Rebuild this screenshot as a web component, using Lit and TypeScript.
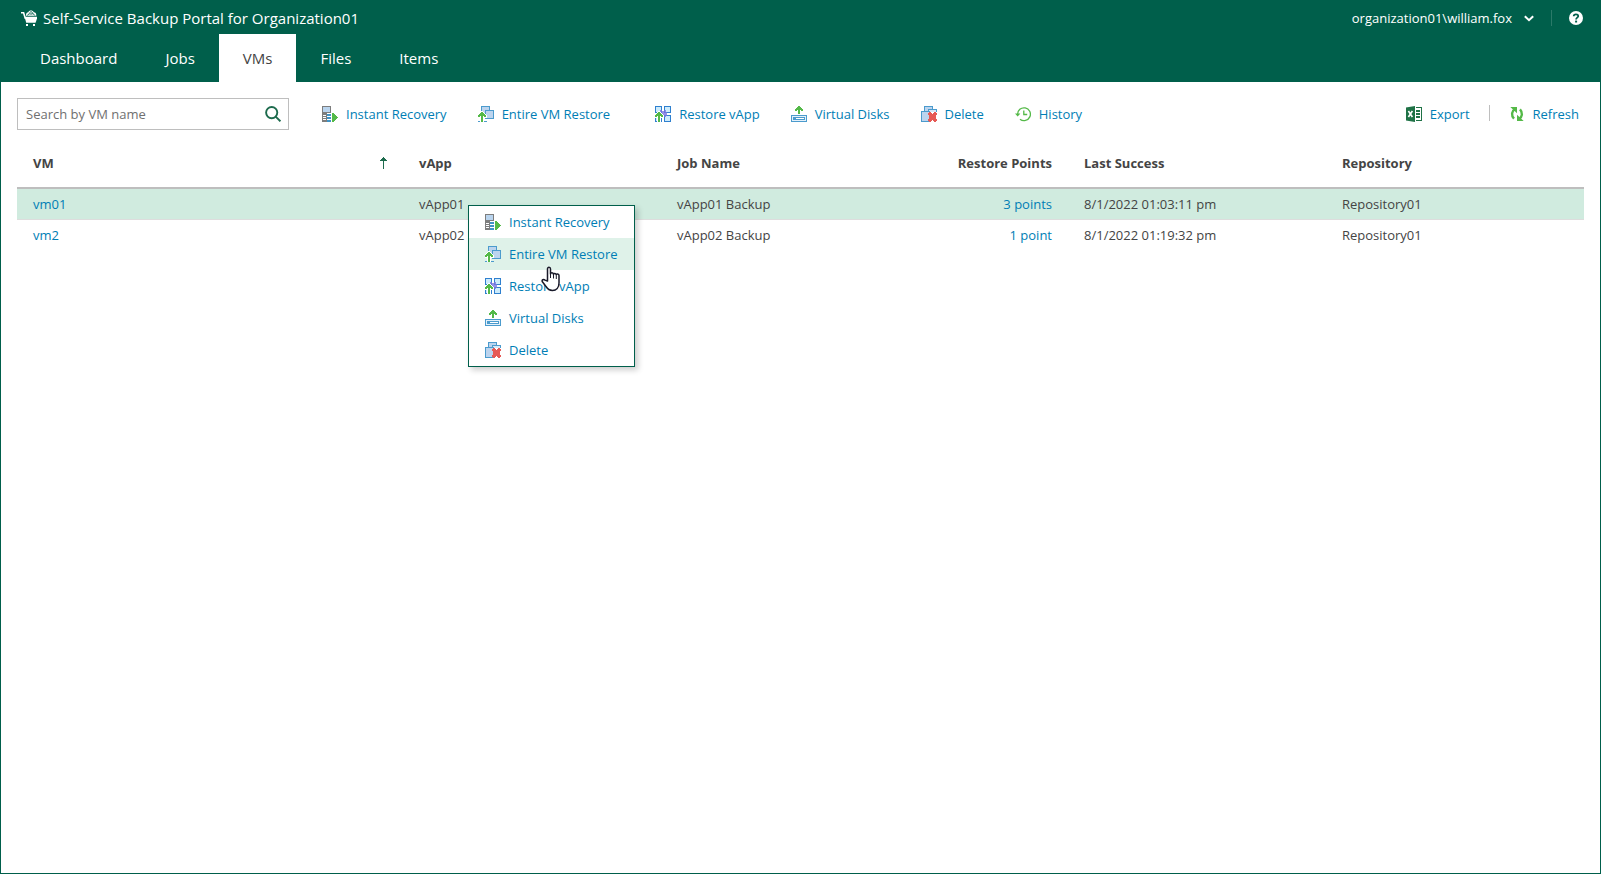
import { LitElement, html, svg, css } from "lit";
import { customElement, property, state } from "lit/decorators.js";
import { classMap } from "lit/directives/class-map.js";

const ARROW = svg`
  <path fill="#fff" d="M3 5h2v1h1v1h1v1h1v1h1v3H6v4H2v-4H0V8h1V7h1V6h1z"/>
  <path fill="#54b948" d="M3 6h2v1h1v1h1v1h1v2H6v-1H5V16H3V10H2v1H0V9h1V8h1V7h1z"/>`;

const ICONS: Record<string, unknown> = {
  instant: svg`
    <path fill="#7d7d7d" d="M0 0h9v7H5v9H0z"/>
    <path fill="#b9d4ee" d="M1 1h7v5H1z"/>
    <path fill="#fff" d="M1 9h3v1H1zM1 11h3v1H1zM1 13h3v1H1z"/>
    <path fill="#3f93c6" d="M5 8h4v2H5zM5 11h4v2H5zM5 14h4v2H5z"/>
    <path fill="#54b948" d="M10 7h2v1h1v1h1v1h1v1h1v1h-1v1h-1v1h-1v1h-1v1h-2z"/>`,
  entire: svg`
    <path fill="#4b9bcd" d="M3 0h9v9H3z"/>
    <path fill="#bcd4ee" d="M4 1h7v7H4z"/>
    <path fill="#4b9bcd" d="M7 4h9v9H7z"/>
    <path fill="#bcd4ee" d="M8 5h7v7H8z"/>
    ${ARROW}
    <path fill="#4b9bcd" d="M0 15h2v1H0zM6 15h3v1H6z"/>`,
  vapp: svg`
    <path fill="#2f80cf" d="M0 0h7v7H0zM9 0h7v7H9zM9 9h7v7H9zM0 9h7v7H0z"/>
    <path fill="#cdebfb" d="M1 1h5v5H1zM10 1h5v5h-5zM10 10h5v5h-5zM1 10h5v5H1z"/>
    <path fill="#7a74e0" opacity=".8" d="M5 4h2v1h2V4h2v2h1v4h-1v1H9v1H7v-1H5v-1H4V6h1z"/>
    ${ARROW}
    <path fill="#2f80cf" d="M0 15h2v1H0zM6 15h1v1H6z"/>`,
  disks: svg`
    <path fill="#54b948" d="M7 0h2v1h1v1h1v1h1v2h-2V4H9v4H7V4H6v1H4V3h1V2h1V1h1z"/>
    <path fill="#4b9bcd" d="M0 9h16v7H0z"/>
    <path fill="#e4f0fa" d="M1 10h14v5H1z"/>
    <path fill="#4b9bcd" d="M2 11h12v3H2z"/>
    <path fill="#fff" d="M5 12h8v1H5z"/>`,
  remove: svg`
    <path fill="#4b9bcd" d="M3 0h9v8H3z"/>
    <path fill="#bcd4ee" d="M4 1h7v6H4z"/>
    <path fill="#4b9bcd" d="M7 3h9v8H7z"/>
    <path fill="#d8e8f6" d="M8 4h7v6H8z"/>
    <path fill="#4b9bcd" d="M0 5h9v11H0z"/>
    <path fill="#bcd4ee" d="M1 6h7v9H1z"/>
    <path fill="#fff" d="M8 6h8v10H8z"/>
    <path fill="#e65a55" d="M8 6h2v1h1v1h1V7h1V6h2v1h1v2h-1v4h1v2h-1v1h-2v-1h-1v-1h-1v1h-1v1H8v-1H7v-2h1V9H7V7h1z"/>`,
  history: svg`
    <g fill="none" stroke="#54b948" stroke-width="1.3" shape-rendering="auto">
      <path d="M2.6 8.5A6.4 6.4 0 1 1 5 13.2"/>
      <path d="M8.8 4.5v4h3.4"/>
    </g>
    <path fill="#54b948" shape-rendering="auto" d="M0 7.5h5.4L2.7 10.6z"/>`,
  excel: svg`
    <path fill="#1f7246" shape-rendering="auto" d="M0 1.6 9 0v16L0 14.4z"/>
    <path fill="none" stroke="#fff" stroke-width="1.6" shape-rendering="auto" d="M2.4 5 6.4 11M6.4 5 2.4 11"/>
    <path fill="#1f7246" d="M10 1h6v14h-6v-1h5V2h-5z"/>
    <path fill="#1f7246" d="M10 4h4v2h-4zM10 7h4v2h-4zM10 10h4v2h-4z"/>`,
  refresh: svg`
    <g fill="none" stroke="#54b948" stroke-width="2.4" shape-rendering="auto">
      <path d="M6 3C2.600 5 2 9.400 5 12.600"/>
      <path d="M10 13c3.400-2 4-6.400 1-9.600"/>
    </g>
    <path fill="#54b948" shape-rendering="auto" d="M1.300 1h6.700v6.300zM14.700 15H8V8.700z"/>`,
};

@customElement("ui-icon")
class UiIcon extends LitElement {
  @property() name = "";
  static styles = css`
    :host { display: block; flex: none; width: 16px; height: 16px; }
    svg { display: block; }
  `;
  render() {
    return html`<svg width="16" height="16" viewBox="0 0 16 16" shape-rendering="crispEdges" aria-hidden="true">${ICONS[this.name]}</svg>`;
  }
}

interface Vm { vm: string; vapp: string; job: string; points: string; success: string; repo: string; }

@customElement("app-root")
class AppRoot extends LitElement {
  @state() tab = "VMs";
  @state() selected = "vm01";

  static styles = css`
    :host {
      display: flex; flex-direction: column; box-sizing: border-box; min-height: 100vh;
      position: relative; background: #fff; color: #444;
      border: 1px solid #005f4b; border-top: 0;
      font: 13px/18px "Open Sans", "Noto Sans", sans-serif;
    }
    * { box-sizing: border-box; }
    button, input { font: inherit; color: inherit; background: none; border: 0; margin: 0; padding: 0; }
    button { cursor: pointer; white-space: nowrap; }
    a { color: #007eb5; text-decoration: none; }

    .header { background: #005f4b; color: #fff; margin: 0 -1px; padding: 0 17px 0 16px; }
    .top { display: flex; align-items: center; justify-content: space-between; height: 34px; padding-top: 2px; }
    .brand { display: flex; align-items: center; gap: 6px; padding-left: 5px; }
    .brand svg { display: block; }
    .title { font-size: 15px; line-height: 20px; font-weight: 400; margin: 0; }
    .account { display: flex; align-items: center; }
    .user { display: flex; align-items: center; gap: 12px; padding-right: 17px; border-right: 1px solid #2b7a69; height: 16px; }
    .help { padding: 0 1px 0 17px; }
    .help svg, .user svg { display: block; }
    .tabs { display: flex; }
    .tab { height: 48px; padding: 0 24px; font-size: 15px; line-height: 20px; }
    .tab.active { background: #fff; color: #444; }

    .content { padding: 16px; }
    .toolbar { display: flex; align-items: center; height: 32px; }
    .search { display: flex; align-items: center; width: 272px; height: 32px; border: 1px solid #bebebe; margin-right: 33px; padding: 0 7px 0 8px; }
    .search input { flex: 1; min-width: 0; height: 30px; outline: 0; }
    .search input::placeholder { color: #707070; opacity: 1; }
    .search svg { display: block; }
    .actions { display: flex; gap: 31px; }
    .actions + .actions { margin-left: 45px; }
    .toolbar .end { margin-left: auto; gap: 0; padding-right: 5px; }
    .action { display: flex; align-items: center; gap: 8px; height: 18px; color: #007eb5; }
    .rule { width: 1px; height: 16px; margin: 0 19px; background: #bebebe; }

    table { width: 100%; margin-top: 8px; border-collapse: collapse; table-layout: fixed; }
    th, td { padding: 0 16px; text-align: left; font-weight: 400; }
    th { height: 50px; font-weight: 700; color: #444; border-bottom: 2px solid #bebebe; }
    td { height: 31px; }
    tbody tr + tr td { border-top: 1px solid #ddd; }
    .selected { background: #d0ebdf; }
    .wide { width: 258px; }
    .narrow { width: 149px; }
    .num { text-align: right; }
    .sorted { display: flex; align-items: center; justify-content: space-between; }

    .menu {
      position: absolute; left: 467px; top: 205px; width: 167px; background: #fff;
      border: 1px solid #005f4b; box-shadow: 3px 3px 6px rgba(0, 0, 0, 0.2);
    }
    .item { display: flex; align-items: center; gap: 8px; width: 100%; height: 32px; padding: 0 16px; color: #007eb5; }
    .item.hover, .item:hover { background: #dff2e9; }
    .cursor { position: absolute; left: 540px; top: 266px; pointer-events: none; }
  `;

  private rows: Vm[] = [
    { vm: "vm01", vapp: "vApp01", job: "vApp01 Backup", points: "3 points", success: "8/1/2022 01:03:11 pm", repo: "Repository01" },
    { vm: "vm2", vapp: "vApp02", job: "vApp02 Backup", points: "1 point", success: "8/1/2022 01:19:32 pm", repo: "Repository01" },
  ];

  private action(icon: string, label: string) {
    return html`<button class="action"><ui-icon name=${icon}></ui-icon>${label}</button>`;
  }

  private menuItem(icon: string, label: string, hover = false) {
    return html`<button role="menuitem" class=${classMap({ item: true, hover })}><ui-icon name=${icon}></ui-icon>${label}</button>`;
  }

  render() {
    return html`
      <header class="header">
        <div class="top">
          <div class="brand">
            <svg width="16" height="16" viewBox="0 0 16 16" aria-hidden="true">
              <path fill="none" stroke="#fff" stroke-width="1.600" d="M0 2.700h2.600l1.800 6"/>
              <path fill="#fff" d="M3.600 6.800H16v1.600L14.600 12.700H5.200z"/>
              <path fill="#fff" d="M5 5.800C4.800 3.600 6 2.200 7.300 2.200 7.900-.2 11.900-.2 12.800 2.200 14.800 2.300 15.600 4 15.200 5.800z"/>
              <path fill="none" stroke="#005f4b" stroke-width="1" d="M6.600 5.400C7.400 3.400 9 3.600 10 4.200 11.400 3.200 13 3.600 13.600 5.400M8.600 2.600c.8-1 2.200-1 3 0"/>
              <path fill="#fff" d="M5 14h2v2H5zM12 14h2v2h-2z"/>
            </svg>
            <h1 class="title">Self-Service Backup Portal for Organization01</h1>
          </div>
          <div class="account">
            <button class="user">organization01\\william.fox
              <svg width="10" height="7" viewBox="0 0 10 7" aria-hidden="true"><path fill="none" stroke="#fff" stroke-width="2" d="M.8 1.200 5 5.200 9.200 1.200"/></svg>
            </button>
            <button class="help" aria-label="Help">
              <svg width="14" height="14" viewBox="0 0 14 14" aria-hidden="true">
                <circle cx="7" cy="7" r="7" fill="#fff"/>
                <path fill="none" stroke="#005f4b" stroke-width="1.800" d="M4.700 5.200C4.800 2.600 9.300 2.700 9.200 5.200 9.100 6.700 7.100 6.600 7.100 8.500"/>
                <path fill="#005f4b" d="M6.100 9.600h2v1.900h-2z"/>
              </svg>
            </button>
          </div>
        </div>
        <nav class="tabs">
          ${["Dashboard", "Jobs", "VMs", "Files", "Items"].map(
            (t) => html`<button class=${classMap({ tab: true, active: t === this.tab })} @click=${() => (this.tab = t)}>${t}</button>`
          )}
        </nav>
      </header>
      <main class="content">
        <div class="toolbar">
          <div class="search">
            <input type="text" placeholder="Search by VM name" aria-label="Search by VM name" />
            <svg width="16" height="16" viewBox="0 0 16 16" aria-hidden="true"><g fill="none" stroke="#1d6b4d" stroke-width="1.900"><circle cx="6.700" cy="6.600" r="5.600"/><path d="m10.700 10.600 4.700 4.700"/></g></svg>
          </div>
          <div class="actions">
            ${this.action("instant", "Instant Recovery")}
            ${this.action("entire", "Entire VM Restore")}
          </div>
          <div class="actions">
            ${this.action("vapp", "Restore vApp")}
            ${this.action("disks", "Virtual Disks")}
            ${this.action("remove", "Delete")}
            ${this.action("history", "History")}
          </div>
          <div class="actions end">
            ${this.action("excel", "Export")}
            <span class="rule"></span>
            ${this.action("refresh", "Refresh")}
          </div>
        </div>
        <table>
          <thead>
            <tr>
              <th>
                <div class="sorted">VM
                  <svg width="7" height="12" viewBox="0 0 7 12" shape-rendering="crispEdges" aria-hidden="true"><path fill="#1d6b4d" d="M3 0h1v1h1v1h1v1h1v1H4v8H3V4H0V3h1V2h1V1h1z"/></svg>
                </div>
              </th>
              <th class="wide">vApp</th>
              <th class="wide">Job Name</th>
              <th class="narrow num">Restore Points</th>
              <th class="wide">Last Success</th>
              <th class="wide">Repository</th>
            </tr>
          </thead>
          <tbody>
            ${this.rows.map(
              (r) => html`<tr class=${classMap({ selected: r.vm === this.selected })} @click=${() => (this.selected = r.vm)}>
                <td><a href="#">${r.vm}</a></td>
                <td>${r.vapp}</td>
                <td>${r.job}</td>
                <td class="num"><a href="#">${r.points}</a></td>
                <td>${r.success}</td>
                <td>${r.repo}</td>
              </tr>`
            )}
          </tbody>
        </table>
      </main>
      <div class="menu" role="menu">
        ${this.menuItem("instant", "Instant Recovery")}
        ${this.menuItem("entire", "Entire VM Restore", true)}
        ${this.menuItem("vapp", "Restore vApp")}
        ${this.menuItem("disks", "Virtual Disks")}
        ${this.menuItem("remove", "Delete")}
      </div>
      <svg class="cursor" width="19" height="26" viewBox="0 0 19 26" aria-hidden="true">
        <path fill="#fff" stroke="#1a1a2a" stroke-width="1.500" stroke-linejoin="round" d="M6.500 15V3c0-2.400 3-2.400 3 0v5c0-1.600 3-1.600 3 .4 0-1.500 2.800-1.300 2.800.5 0-1.400 2.700-1.200 2.700.6V17c0 4.500-2.700 7.400-6.500 7.400-3.400 0-5-1.400-6.500-3.900L1.400 15.800c-1-1.900 1.200-3 2.600-1.700z"/>
        <path fill="none" stroke="#1a1a2a" stroke-width="1" d="M9.500 8v4M12.500 8.500v4M15.300 9.500V13"/>
      </svg>
    `;
  }
}
